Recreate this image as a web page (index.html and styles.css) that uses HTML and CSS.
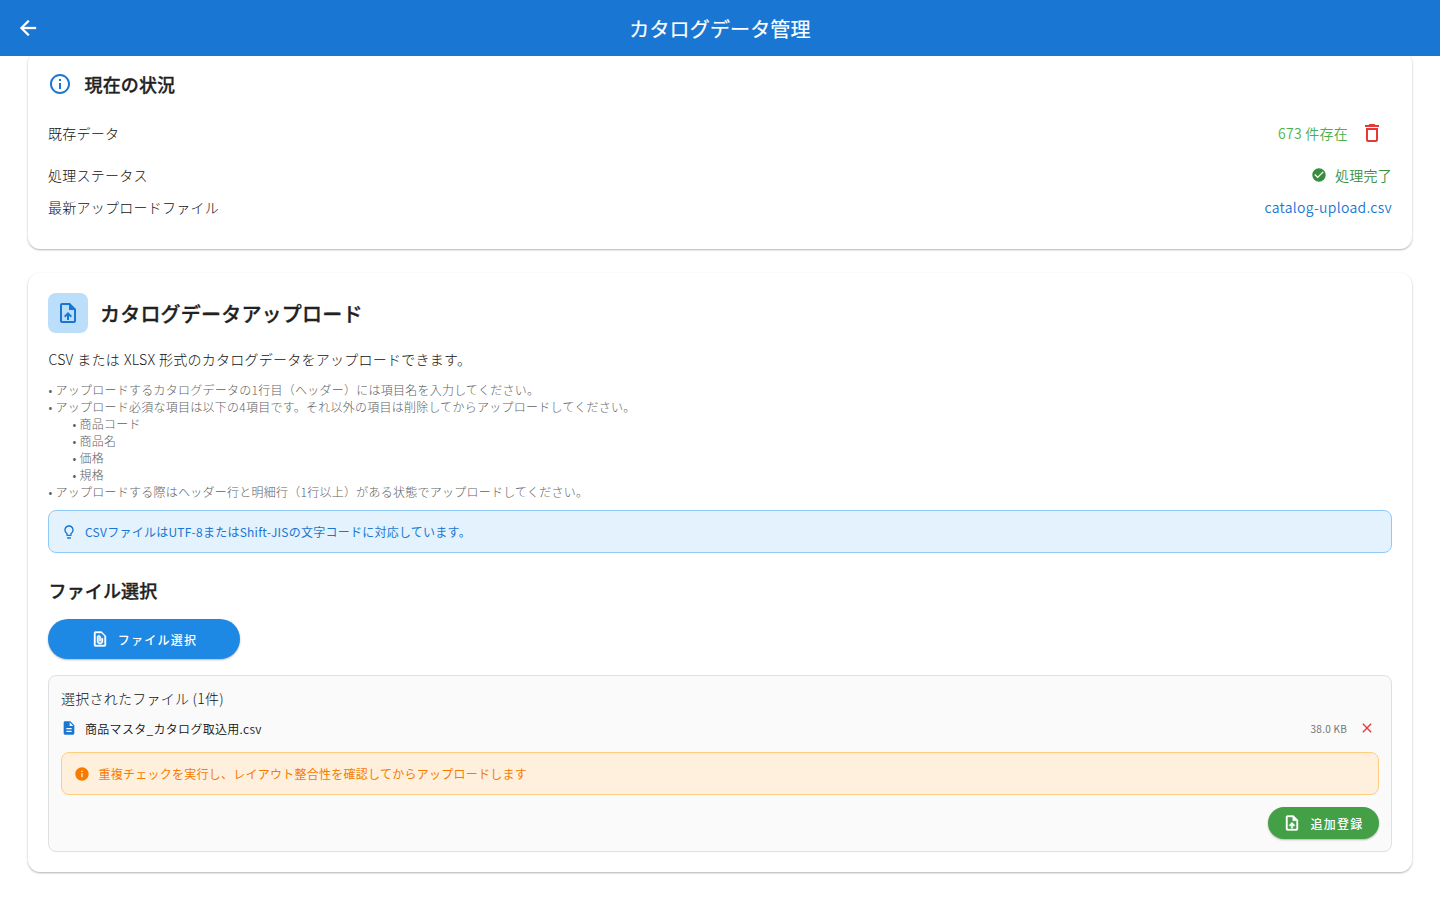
FILE: index.html
```html
<!DOCTYPE html>
<html lang="ja">
<head>
<meta charset="utf-8">
<title>カタログデータ管理</title>
<link rel="stylesheet" href="styles.css">
</head>
<body>
<header class="appbar">
  <svg class="icon back" viewBox="0 0 24 24"><path d="M20 11H7.83l5.59-5.59L12 4l-8 8 8 8 1.41-1.41L7.83 13H20v-2z"/></svg>
  <h1 class="appbar-title">カタログデータ管理</h1>
</header>
<main class="content">
  <section class="card status-card">
    <div class="status-head">
      <svg class="icon blue" viewBox="0 0 24 24"><path d="M11 7h2v2h-2zm0 4h2v6h-2zm1-9C6.48 2 2 6.48 2 12s4.48 10 10 10 10-4.480 10-10S17.520 2 12 2zm0 18c-4.410 0-8-3.590-8-8s3.590-8 8-8 8 3.590 8 8-3.590 8-8 8z"/></svg>
      <h2 class="heading">現在の状況</h2>
    </div>
    <div class="row row-tall">
      <span class="label">既存データ</span>
      <div class="value">
        <span class="count">673 件存在</span>
        <button class="icon-button" aria-label="削除"><svg class="icon red" viewBox="0 0 24 24"><path d="M6 19c0 1.100.9 2 2 2h8c1.100 0 2-.9 2-2V7H6v12zM8 9h8v10H8V9zm7.500-5l-1-1h-5l-1 1H5v2h14V4z"/></svg></button>
      </div>
    </div>
    <div class="row">
      <span class="label">処理ステータス</span>
      <div class="value done">
        <svg class="icon small" viewBox="0 0 24 24"><path d="M12 2C6.480 2 2 6.480 2 12s4.480 10 10 10 10-4.480 10-10S17.520 2 12 2zm-2 15l-5-5 1.410-1.410L10 14.170l7.590-7.590L19 8l-9 9z"/></svg>
        <span>処理完了</span>
      </div>
    </div>
    <div class="row">
      <span class="label">最新アップロードファイル</span>
      <span class="link">catalog-upload.csv</span>
    </div>
  </section>

  <section class="card upload-card">
    <div class="upload-head">
      <div class="badge"><svg class="icon blue" viewBox="0 0 24 24"><path d="M14 2H6c-1.100 0-1.990.9-1.990 2L4 20c0 1.100.89 2 1.990 2H18c1.100 0 2-.9 2-2V8l-6-6zm4 18H6V4h7v5h5v11zM8 15.010l1.410 1.410L11 14.840V19h2v-4.160l1.590 1.590L16 15.010 12.010 11 8 15.010z"/></svg></div>
      <h2 class="title">カタログデータアップロード</h2>
    </div>
    <p class="lead">CSV または XLSX 形式のカタログデータをアップロードできます。</p>
    <div class="notes">
      <div>• アップロードするカタログデータの1行目（ヘッダー）には項目名を入力してください。</div>
      <div>• アップロード必須な項目は以下の4項目です。それ以外の項目は削除してからアップロードしてください。</div>
      <div class="sub">• 商品コード</div>
      <div class="sub">• 商品名</div>
      <div class="sub">• 価格</div>
      <div class="sub">• 規格</div>
      <div>• アップロードする際はヘッダー行と明細行（1行以上）がある状態でアップロードしてください。</div>
    </div>
    <div class="notice info">
      <svg class="icon small" viewBox="0 0 24 24"><path d="M9 21c0 .55.45 1 1 1h4c.55 0 1-.45 1-1v-1H9v1zm3-19C8.140 2 5 5.140 5 9c0 2.380 1.190 4.470 3 5.740V17c0 .55.45 1 1 1h6c.55 0 1-.45 1-1v-2.260c1.810-1.270 3-3.360 3-5.740 0-3.860-3.140-7-7-7zm2.850 11.100l-.85.6V16h-4v-2.300l-.85-.6C7.800 12.160 7 10.630 7 9c0-2.760 2.240-5 5-5s5 2.240 5 5c0 1.630-.8 3.160-2.150 4.100z"/></svg>
      <span>CSVファイルはUTF-8またはShift-JISの文字コードに対応しています。</span>
    </div>
    <h3 class="heading select-heading">ファイル選択</h3>
    <button class="pill select">
      <svg class="icon medium" viewBox="0 0 24 24"><path d="M14 2H6c-1.100 0-2 .9-2 2v16c0 1.100.9 2 2 2h12c1.100 0 2-.9 2-2V8l-6-6zM6 20V4h8l4 4v12H6zm10-9v4c0 2.210-1.790 4-4 4s-4-1.790-4-4V9.500C8 8.120 9.120 7 10.500 7S13 8.120 13 9.500V15h-2V9.500c0-.28-.22-.5-.5-.5s-.5.22-.5.5V15c0 1.100.9 2 2 2s2-.9 2-2v-4h2z"/></svg>
      <span>ファイル選択</span>
    </button>
    <div class="panel">
      <div class="panel-title">選択されたファイル (1件)</div>
      <div class="file">
        <svg class="icon small blue" viewBox="0 0 24 24"><path d="M14 2H6c-1.100 0-1.990.9-1.990 2L4 20c0 1.100.89 2 1.990 2H18c1.100 0 2-.9 2-2V8l-6-6zm2 16H8v-2h8v2zm0-4H8v-2h8v2zm-3-5V3.500L18.500 9H13z"/></svg>
        <span class="file-name">商品マスタ_カタログ取込用.csv</span>
        <span class="file-size">38.0 KB</span>
        <button class="remove" aria-label="取消"><svg class="icon small red" viewBox="0 0 24 24"><path d="M19 6.410L17.590 5 12 10.590 6.410 5 5 6.410 10.590 12 5 17.590 6.410 19 12 13.410 17.590 19 19 17.590 13.410 12z"/></svg></button>
      </div>
      <div class="notice warn">
        <svg class="icon small" viewBox="0 0 24 24"><path d="M12 2C6.480 2 2 6.480 2 12s4.480 10 10 10 10-4.480 10-10S17.520 2 12 2zm1 15h-2v-6h2v6zm0-8h-2V7h2v2z"/></svg>
        <span>重複チェックを実行し、レイアウト整合性を確認してからアップロードします</span>
      </div>
      <div class="actions">
        <button class="pill register">
          <svg class="icon medium" viewBox="0 0 24 24"><path d="M14 2H6c-1.100 0-1.990.9-1.990 2L4 20c0 1.100.89 2 1.990 2H18c1.100 0 2-.9 2-2V8l-6-6zm4 18H6V4h7v5h5v11zM8 15.010l1.410 1.410L11 14.840V19h2v-4.160l1.590 1.590L16 15.010 12.010 11 8 15.010z"/></svg>
          <span>追加登録</span>
        </button>
      </div>
    </div>
  </section>
</main>
</body>
</html>
```
FILE: styles.css
```css
* { box-sizing: border-box; }
body {
  margin: 0;
  height: 900px;
  overflow: hidden;
  background: #fff;
  color: #111;
  font-family: "Noto Sans CJK JP", sans-serif;
  font-size: 14px;
  font-weight: 300;
  line-height: 20px;
  letter-spacing: 0.25px;
}
h1, h2, h3, p { margin: 0; }
button { border: 0; background: none; padding: 0; font: inherit; color: inherit; }
.icon { width: 24px; height: 24px; flex: none; display: block; fill: currentColor; }
.small { width: 16px; height: 16px; }
.medium { width: 18px; height: 18px; stroke: currentColor; stroke-width: 0.5; }
.back { stroke: currentColor; stroke-width: 0.3; }
.blue { color: #1976d2; }
.red { color: #e53935; }

.appbar {
  position: relative;
  z-index: 1;
  height: 56px;
  padding: 0 16px;
  display: grid;
  grid-template-columns: 24px 1fr 24px;
  align-items: center;
  background: #1976d2;
  color: #fff;
}
.appbar-title {
  text-align: center;
  font-size: 20px;
  font-weight: 400;
  line-height: 29px;
  letter-spacing: 0.15px;
  -webkit-text-stroke: 0.2px currentColor;
}
.content { padding: 0 28px; display: flex; flex-direction: column; gap: 24px; }
.card {
  padding: 20px;
  border-radius: 12px;
  background: #fff;
  box-shadow: 0 1px 2px rgba(0,0,0,.26), 0 1px 3px rgba(0,0,0,.06);
}
.status-card { margin-top: -5px; padding-bottom: 26px; }
.status-head { display: flex; align-items: center; gap: 12px; height: 26px; margin-bottom: 10px; }
.heading, .title { color: #212121; font-weight: 500; -webkit-text-stroke: 0.3px currentColor; }
.heading { padding-left: 0.5px; font-size: 18px; line-height: 26px; letter-spacing: 0.15px; }
.row { height: 32px; display: flex; align-items: center; justify-content: space-between; }
.row-tall { height: 52px; }
.lead, .notes > div:not(.sub) { padding-left: 0.5px; }
.value { display: flex; align-items: center; gap: 4px; }
.count { color: #4caf50; font-weight: 350; }
.icon-button { width: 40px; height: 40px; display: grid; place-items: center; }
.done { gap: 8px; color: #388e3c; font-weight: 350; }
.link { color: #1976d2; font-weight: 350; letter-spacing: 0.31px; }

.upload-head { display: flex; align-items: center; gap: 12px; margin-bottom: 16px; }
.badge { width: 40px; height: 40px; border-radius: 8px; background: #bbdefb; display: grid; place-items: center; }
.title { font-size: 20px; line-height: 29px; letter-spacing: 0.2px; }
.lead { margin-bottom: 12px; word-spacing: 0.5px; }
.notes { margin-bottom: 10px; color: #616161; font-size: 12px; line-height: 17px; }
.sub { padding-left: 24.5px; }
.notice {
  height: 43px;
  padding: 0 12px;
  display: flex;
  align-items: center;
  gap: 8px;
  border: 1px solid;
  border-radius: 8px;
  font-size: 12px;
  font-weight: 400;
  line-height: 17px;
}
.info { border-color: #90caf9; background: #e3f2fd; color: #1976d2; }
.warn { border-color: #ffcc80; background: #fff0de; color: #f57c00; }
.warn span { padding-left: 0.5px; }
.select-heading { margin: 24px 0 16px; }
.pill {
  display: flex;
  align-items: center;
  justify-content: center;
  gap: 8px;
  color: #fff;
  font-size: 12px;
  font-weight: 500;
  line-height: 17px;
  letter-spacing: 1.25px;
  border-radius: 20px;
  box-shadow: 0 1px 2px rgba(0,0,0,.28);
}
.pill span { padding: 1px 0 0 1px; }
.select { width: 192px; height: 40px; background: #1e88e5; }
.panel {
  margin-top: 16px;
  padding: 12px;
  border: 1px solid #e0e0e0;
  border-radius: 8px;
  background: #fafafa;
}
.file { height: 24px; margin: 8px 0 12px; display: flex; align-items: center; font-size: 12px; }
.file-name { flex: 1; padding: 2px 0 0 8px; font-weight: 350; letter-spacing: 0.3px; }
.file-size { padding-top: 2px; margin-right: 8px; color: #757575; font-size: 10px; font-weight: 400; }
.remove { width: 24px; height: 24px; display: grid; place-items: center; }
.actions { margin-top: 12px; display: flex; justify-content: flex-end; }
.register { width: 111px; height: 32px; background: #43a047; }
```
